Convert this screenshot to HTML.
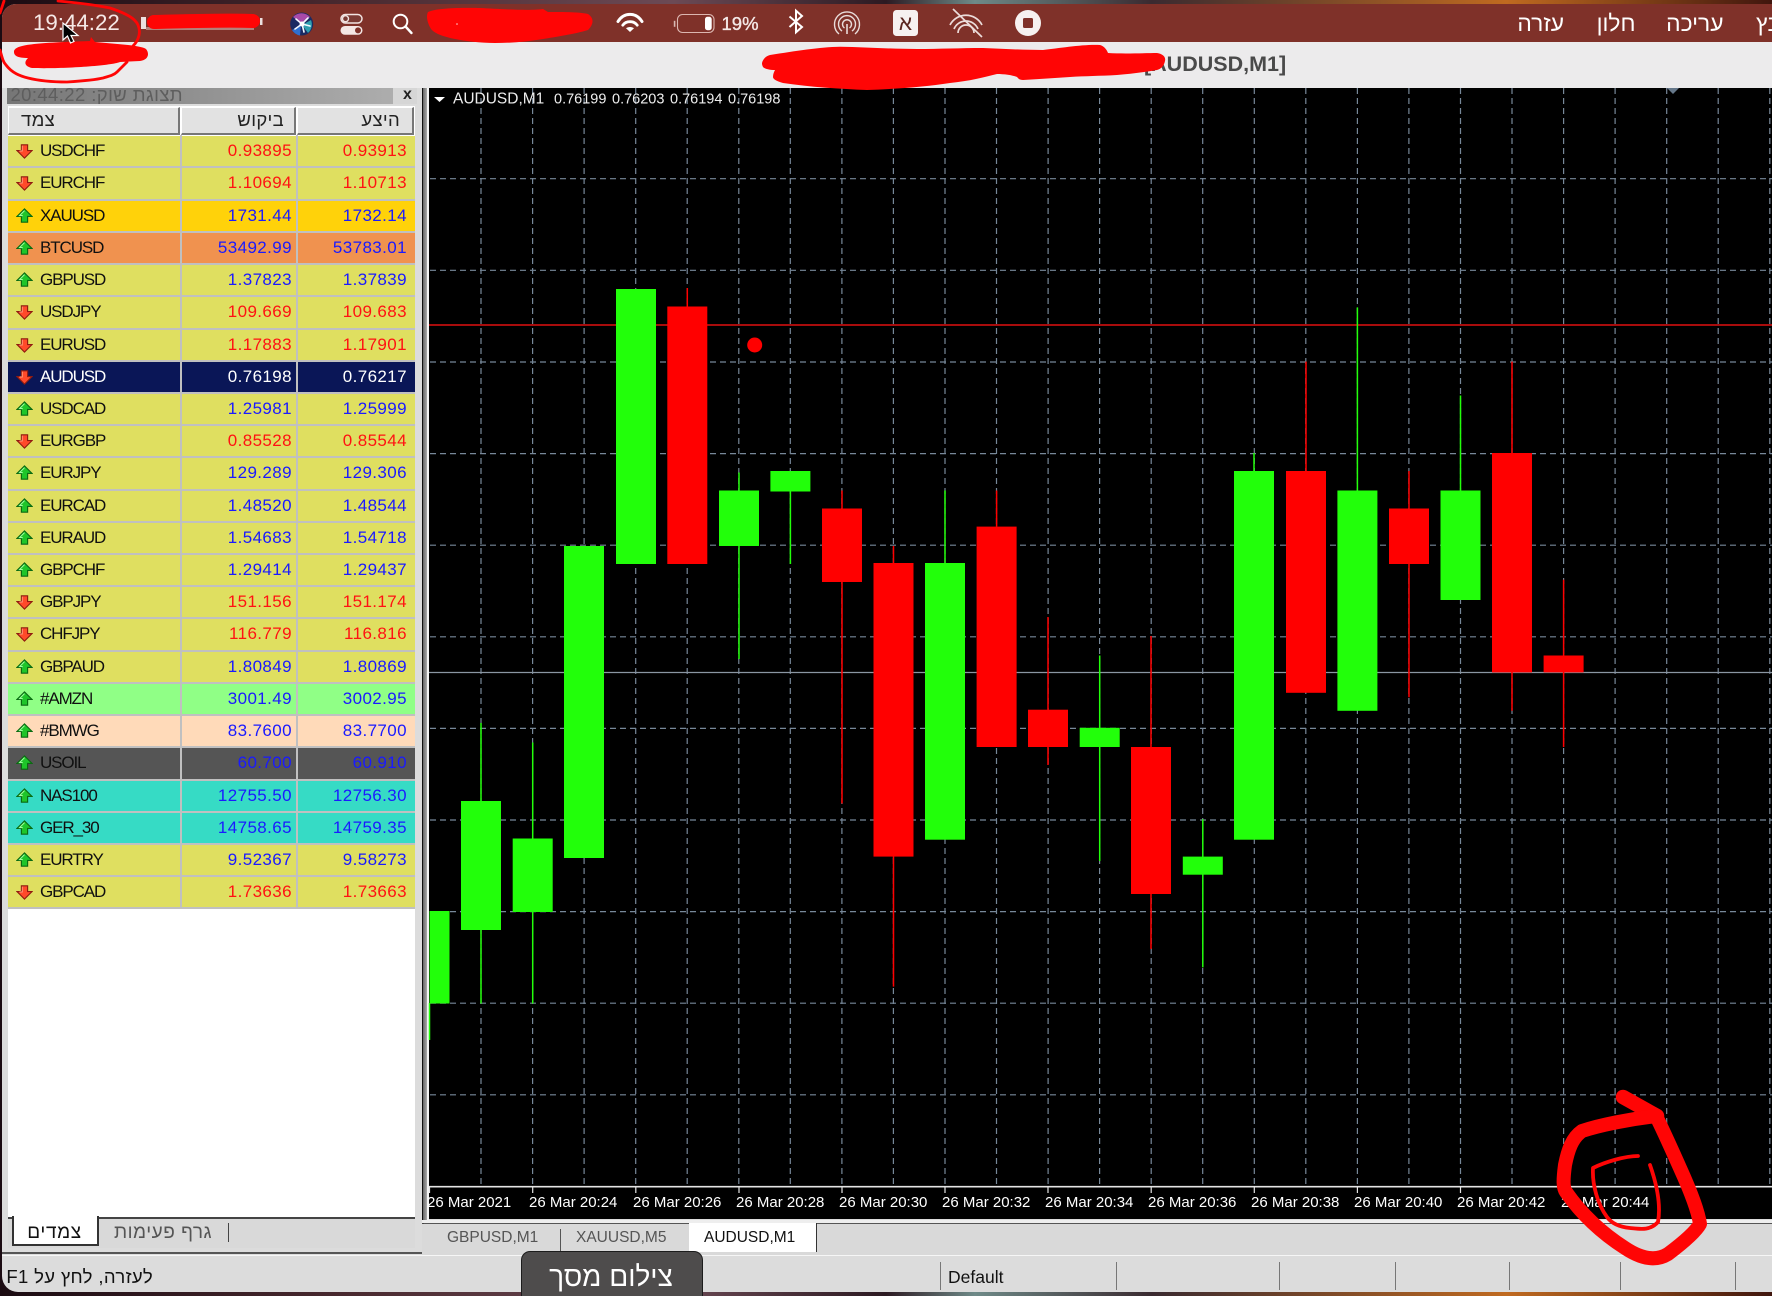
<!DOCTYPE html>
<html lang="he">
<head>
<meta charset="utf-8">
<title>AUDUSD,M1</title>
<style>
html,body{margin:0;padding:0;width:1772px;height:1296px;overflow:hidden;background:#160b10;}
body{position:relative;font-family:"Liberation Sans",sans-serif;}
.abs,.t{position:absolute;}
.t{white-space:nowrap;line-height:1;}
#wall{position:absolute;left:0;top:0;width:1772px;height:1296px;background:linear-gradient(90deg,#1b0b12 0,#4a2a30 20%,#6c4a55 38%,#2c1a22 50%,#6e8a88 55%,#3a2a30 65%,#c06a20 85%,#40160e 100%);}
#win{position:absolute;left:2px;top:4px;width:1770px;height:1288px;background:#dcdcdc;border-radius:14px 0 0 16px;overflow:hidden;}
#menu{position:absolute;left:2px;top:4px;width:1770px;height:38px;background:#7f3129;border-radius:14px 0 0 0;color:#fff;}
#title{position:absolute;left:2px;top:42px;width:1770px;height:46px;background:#ecebec;}
#ptitle{position:absolute;left:7px;top:88px;width:386px;height:16px;background:linear-gradient(90deg,#767676,#adadad);overflow:hidden;}
#pclose{position:absolute;left:393px;top:88px;width:24px;height:16px;background:#d6d6d6;}
#panel{position:absolute;left:8px;top:106px;width:407px;height:1111px;background:#fff;}
.h{position:absolute;top:107px;height:25px;background:#e2e2e2;border-top:1px solid #fff;border-left:1px solid #fff;border-right:2px solid #777;border-bottom:2px solid #777;}
.hb{font-size:18.500px;letter-spacing:.3px;color:#222;}
#rows{position:absolute;left:8px;top:136.200px;width:406.500px;}
.r{position:relative;height:32.230px;box-sizing:border-box;border-bottom:2px solid #c0c0c0;font-size:17px;line-height:30px;color:#101010;}
.r b{position:absolute;left:32px;top:0;font-weight:400;letter-spacing:-1.100px;}
.r i{position:absolute;top:0;font-style:normal;letter-spacing:.4px;}
.r i.p{right:122.500px;}
.r i.q{right:7.500px;}
.r svg{position:absolute;left:8px;top:7px;width:17px;height:16px;}
.k{background:#dfdf60;}
.dn i{color:#ff1212;}
.up i{color:#1a1aff;}
.sep{position:absolute;top:135px;height:774px;width:2px;background:#c0c0c0;}
#chart{position:absolute;left:0;top:0;width:1772px;height:1296px;}
.ax{font-size:15px;fill:#fff;}
.leg{font-size:14.500px;fill:#eee;}
.mn{font-size:22.800px;color:#fff;top:11.500px;}
</style>
</head>
<body>
<div id="wall"></div>
<div id="win"></div>

<div id="menu"></div>
<div id="title"></div>
<div class="t" style="left:33px;top:11.500px;font-size:22.300px;color:#f6e9e7;">19:44:22</div>
<div class="t" style="left:1144px;top:54px;font-size:21.500px;font-weight:700;color:#4a4a4a;" dir="ltr">[AUDUSD,M1]</div>
<div class="t mn" dir="rtl" style="right:208px;">עזרה</div>
<div class="t mn" dir="rtl" style="right:136.500px;">חלון</div>
<div class="t mn" dir="rtl" style="right:48.500px;">עריכה</div>
<div class="t mn" dir="rtl" style="left:1756px;">קובץ</div>
<div class="t" style="left:721.500px;top:15px;font-size:18.500px;color:#f4e9e7;-webkit-text-stroke:.35px #f4e9e7;">19%</div>

<svg class="abs" style="left:0;top:0;" width="1772" height="46" viewBox="0 0 1772 46">
<rect x="141" y="17" width="5" height="12" fill="#fff" opacity=".85"/><rect x="260" y="18" width="2.500" height="7" fill="#fff" opacity=".85"/>
<rect x="146" y="27" width="108" height="3" fill="#e8d0cc" opacity=".5"/>
<circle cx="301.700" cy="24" r="11.500" fill="#1b2a62"/>
<path d="M293 17a11.500 11.500 0 0 1 17 0L302 24z" fill="#a84aa8"/>
<path d="M311 20a11.500 11.500 0 0 1-3 13L302 25z" fill="#2f9fb0"/>
<path d="M292 30a11.500 11.500 0 0 0 8 5.500L301 25z" fill="#2e6fd0"/>
<path d="M302 24L296 19M302 24L308 18M302 24L310 26M302 24L304 32M302 24L295 29" stroke="#f4f8ff" stroke-width="1.600" stroke-linecap="round"/>
<circle cx="302" cy="24" r="2.500" fill="#fff"/>
<rect x="341" y="14.500" width="21" height="8.500" rx="4.250" fill="#7a3a34" stroke="#f2e4e2" stroke-width="1.500"/>
<circle cx="345.500" cy="18.700" r="3" fill="none" stroke="#f2e4e2" stroke-width="1.400"/>
<rect x="340.500" y="26" width="22" height="8.800" rx="4.400" fill="#f4e6e4"/>
<circle cx="358" cy="30.400" r="3" fill="#7f3129"/>
<circle cx="400.500" cy="21.500" r="6.800" fill="none" stroke="#fff" stroke-width="2"/>
<path d="M405.500 26.500l6 6.500" stroke="#fff" stroke-width="2.400" stroke-linecap="round"/>
<path d="M618 21.500C624 12 636 12 642 21.500" fill="none" stroke="#fff" stroke-width="3" stroke-linecap="round"/>
<path d="M622.800 25.200C626 20.500 634 20.500 637.200 25.200" fill="none" stroke="#fff" stroke-width="2.800" stroke-linecap="round"/>
<path d="M626 28.300C628 26.500 632 26.500 634 28.300L630 32z" fill="#fff"/>
<rect x="677.500" y="14.500" width="36.500" height="18" rx="5" fill="none" stroke="#dcb6b0" stroke-width="1.100"/>
<rect x="705" y="16.800" width="6.700" height="13.400" rx="2.500" fill="#fff"/>
<path d="M674.600 20.800v6" stroke="#d8b8b2" stroke-width="1.600"/>
<path d="M789.500 16.500L802 27L796 32.300V10.700L802 16L789.500 27" fill="none" stroke="#fff" stroke-width="2"/>
<g fill="none" stroke="#e9dcda" stroke-width="1.400">
<path d="M839 34a12.500 12.500 0 1 1 16 0"/>
<path d="M842 31a8.500 8.500 0 1 1 10 0"/>
<path d="M844.500 28a4.500 4.500 0 1 1 5 0"/>
</g>
<path d="M847 24v10" stroke="#e9dcda" stroke-width="1.600"/>
<rect x="893" y="10" width="25" height="26" rx="3.500" fill="#f6f1f0"/>
<text x="905.500" y="30" font-size="21" text-anchor="middle" fill="#5a2620">א</text>
<g fill="none" stroke="#ecdcda" stroke-width="1.700">
<path d="M950 25a18 18 0 0 1 32 0"/>
<path d="M954 29a13 13 0 0 1 24 0"/>
<path d="M958 33a8 8 0 0 1 16 0"/>
<path d="M953 9l29 28"/>
</g>
<circle cx="1028" cy="23" r="13" fill="#f6f1f0"/>
<rect x="1023" y="18" width="10" height="10" rx="1.500" fill="#7f3129"/>
</svg>

<!-- left market watch -->
<div id="panel"></div>
<div id="ptitle"><div class="t" dir="rtl" style="left:2px;width:174px;top:-2px;font-size:18.500px;letter-spacing:.4px;color:#5e5e5e;text-align:right;">תצוגת שוק: 20:44:22</div></div>
<div id="pclose"><div class="t" style="left:10px;top:-1px;font-size:16px;font-weight:700;color:#222;">x</div></div>
<div class="h" style="left:8px;width:169px;"></div>
<div class="h" style="left:181px;width:112px;"></div>
<div class="h" style="left:297px;width:114px;"></div>
<div class="t hb" dir="rtl" style="left:15px;width:40px;top:111px;text-align:right;">צמד</div>
<div class="t hb" dir="rtl" style="left:200px;width:84px;top:111px;text-align:right;">ביקוש</div>
<div class="t hb" dir="rtl" style="left:320px;width:80px;top:111px;text-align:right;">היצע</div>

<svg width="0" height="0" style="position:absolute;">
<defs>
<symbol id="u" viewBox="0 0 19 18"><path d="M9.500 1L1 9.500h5V16h7V9.500h5z" fill="#1fc52a" stroke="#0a6a12" stroke-width="1.300"/><path d="M9.500 3L4 8.500h3.500" fill="none" stroke="#9dff9d" stroke-width="1.200"/></symbol>
<symbol id="d" viewBox="0 0 19 18"><path d="M9.500 17L1 8.500h5V2h7v6.500h5z" fill="#ff4a2a" stroke="#8f1c10" stroke-width="1.300"/><path d="M7 3v6H4" fill="none" stroke="#ffa080" stroke-width="1"/></symbol>
</defs>
</svg>

<div id="rows">
<div class="r k dn"><svg><use href="#d"/></svg><b>USDCHF</b><i class="p">0.93895</i><i class="q">0.93913</i></div>
<div class="r k dn"><svg><use href="#d"/></svg><b>EURCHF</b><i class="p">1.10694</i><i class="q">1.10713</i></div>
<div class="r up" style="background:#ffd20a;"><svg><use href="#u"/></svg><b>XAUUSD</b><i class="p">1731.44</i><i class="q">1732.14</i></div>
<div class="r up" style="background:#f0924f;"><svg><use href="#u"/></svg><b>BTCUSD</b><i class="p">53492.99</i><i class="q">53783.01</i></div>
<div class="r k up"><svg><use href="#u"/></svg><b>GBPUSD</b><i class="p">1.37823</i><i class="q">1.37839</i></div>
<div class="r k dn"><svg><use href="#d"/></svg><b>USDJPY</b><i class="p">109.669</i><i class="q">109.683</i></div>
<div class="r k dn"><svg><use href="#d"/></svg><b>EURUSD</b><i class="p">1.17883</i><i class="q">1.17901</i></div>
<div class="r" style="background:#0a1657;color:#fff;"><svg><use href="#d"/></svg><b>AUDUSD</b><i class="p">0.76198</i><i class="q">0.76217</i></div>
<div class="r k up"><svg><use href="#u"/></svg><b>USDCAD</b><i class="p">1.25981</i><i class="q">1.25999</i></div>
<div class="r k dn"><svg><use href="#d"/></svg><b>EURGBP</b><i class="p">0.85528</i><i class="q">0.85544</i></div>
<div class="r k up"><svg><use href="#u"/></svg><b>EURJPY</b><i class="p">129.289</i><i class="q">129.306</i></div>
<div class="r k up"><svg><use href="#u"/></svg><b>EURCAD</b><i class="p">1.48520</i><i class="q">1.48544</i></div>
<div class="r k up"><svg><use href="#u"/></svg><b>EURAUD</b><i class="p">1.54683</i><i class="q">1.54718</i></div>
<div class="r k up"><svg><use href="#u"/></svg><b>GBPCHF</b><i class="p">1.29414</i><i class="q">1.29437</i></div>
<div class="r k dn"><svg><use href="#d"/></svg><b>GBPJPY</b><i class="p">151.156</i><i class="q">151.174</i></div>
<div class="r k dn"><svg><use href="#d"/></svg><b>CHFJPY</b><i class="p">116.779</i><i class="q">116.816</i></div>
<div class="r k up"><svg><use href="#u"/></svg><b>GBPAUD</b><i class="p">1.80849</i><i class="q">1.80869</i></div>
<div class="r up" style="background:#90ff86;"><svg><use href="#u"/></svg><b>#AMZN</b><i class="p">3001.49</i><i class="q">3002.95</i></div>
<div class="r up" style="background:#ffdab9;"><svg><use href="#u"/></svg><b>#BMWG</b><i class="p">83.7600</i><i class="q">83.7700</i></div>
<div class="r up" style="background:#555;"><svg><use href="#u"/></svg><b>USOIL</b><i class="p">60.700</i><i class="q">60.910</i></div>
<div class="r up" style="background:#36dbc5;"><svg><use href="#u"/></svg><b>NAS100</b><i class="p">12755.50</i><i class="q">12756.30</i></div>
<div class="r up" style="background:#36dbc5;"><svg><use href="#u"/></svg><b>GER_30</b><i class="p">14758.65</i><i class="q">14759.35</i></div>
<div class="r k up"><svg><use href="#u"/></svg><b>EURTRY</b><i class="p">9.52367</i><i class="q">9.58273</i></div>
<div class="r k dn"><svg><use href="#d"/></svg><b>GBPCAD</b><i class="p">1.73636</i><i class="q">1.73663</i></div>
</div>
<div class="sep" style="left:179.500px;"></div>
<div class="sep" style="left:295.500px;"></div>

<!-- panel tabs -->
<div class="abs" style="left:8px;top:1217px;width:407px;height:31px;background:#d9d9d9;border-top:2px solid #444;box-sizing:border-box;"></div>
<div class="abs" style="left:12px;top:1216px;width:87px;height:29.500px;background:#fff;border-left:2px solid #333;border-right:2px solid #333;border-bottom:2px solid #333;box-sizing:border-box;"></div>
<div class="t" dir="rtl" style="left:24px;width:61px;top:1223px;font-size:19px;letter-spacing:.6px;color:#111;text-align:center;">צמדים</div>
<div class="t" dir="rtl" style="left:110px;width:106px;top:1223px;font-size:19px;letter-spacing:.5px;color:#555;text-align:center;">גרף פעימות</div>
<div class="abs" style="left:228px;top:1223px;width:1px;height:19px;background:#444;"></div>
<div class="abs" style="left:2px;top:1252px;width:420px;height:2px;background:#555;"></div>

<!-- divider between panel and chart -->
<div class="abs" style="left:422px;top:88px;width:1px;height:1134px;background:#111;"></div>
<div class="abs" style="left:423px;top:88px;width:4px;height:1134px;background:linear-gradient(90deg,#666,#aaa);"></div>
<div class="abs" style="left:427px;top:88px;width:1.500px;height:1134px;background:#f4f4f4;"></div>

<!-- chart -->
<div class="abs" style="left:428.500px;top:88px;width:1344px;height:1131px;background:#000;"></div>
<svg id="chart" viewBox="0 0 1772 1296">
<path stroke="#778899" stroke-width="1.200" stroke-dasharray="6 4" fill="none" d="M481 88V1186M532.600 88V1186M584.100 88V1186M635.700 88V1186M687.200 88V1186M738.800 88V1186M790.300 88V1186M841.900 88V1186M893.400 88V1186M945 88V1186M996.500 88V1186M1048.100 88V1186M1099.600 88V1186M1151.200 88V1186M1202.700 88V1186M1254.300 88V1186M1305.800 88V1186M1357.400 88V1186M1408.900 88V1186M1460.500 88V1186M1512 88V1186M1563.600 88V1186M1615.100 88V1186M1666.700 88V1186M1718.200 88V1186M1769.800 88V1186"/>
<path stroke="#778899" stroke-width="1.200" stroke-dasharray="6 4" fill="none" d="M430 178.700H1772M430 270.300H1772M430 362H1772M430 453.600H1772M430 545.200H1772M430 636.800H1772M430 728.400H1772M430 820H1772M430 911.600H1772M430 1003.200H1772M430 1094.800H1772"/>
<path d="M429 672.500H1772" stroke="#8a96a2" stroke-width="1.200"/>
<path d="M429 325H1772" stroke="#e01010" stroke-width="1.500"/>
<circle cx="754.700" cy="345" r="7.500" fill="#f00"/>
<path d="M429 1186.700H1772" stroke="#e4e4e4" stroke-width="1.600"/>
<path d="M429.500 1187v6M532.700 1187v6M635.800 1187v6M739 1187v6M842 1187v6M945 1187v6M1048 1187v6M1151.200 1187v6M1254.300 1187v6M1357.400 1187v6M1460.500 1187v6M1563.600 1187v6" stroke="#e4e4e4" stroke-width="1.200"/>
<!-- green candles -->
<g stroke="#22ff0a" stroke-width="1.500">
<path d="M429.500 1003V1040M481 723V1003.500M532.700 742.500V1003.500M739 472.500V659M790.400 471V564M945 490.500V563M1099.700 655.500V861M1202.800 819.300V967.400M1254 453V471M1357.400 307.400V490.500M1460.500 395.500V490.500"/>
</g>
<g fill="#22ff0a">
<rect x="429.500" y="911" width="20" height="92.500"/>
<rect x="461" y="801" width="40" height="129"/>
<rect x="512.700" y="838.500" width="40" height="73.500"/>
<rect x="564" y="546" width="40" height="312"/>
<rect x="616" y="289" width="40" height="275"/>
<rect x="719" y="490.500" width="40" height="55.500"/>
<rect x="770.400" y="471" width="40" height="20.500"/>
<rect x="925" y="563" width="40" height="276.700"/>
<rect x="1079.700" y="727.800" width="40" height="19.200"/>
<rect x="1182.800" y="856.600" width="40" height="18.100"/>
<rect x="1234" y="471" width="40" height="368.700"/>
<rect x="1337.400" y="490.500" width="40" height="220.300"/>
<rect x="1440.500" y="490.500" width="40" height="109.500"/>
</g>
<!-- red candles -->
<g stroke="#f00" stroke-width="1.500">
<path d="M687.300 288V306.500M842 490.500V803.500M893.500 546V986.600M996.600 490.500V526.600M1048 617V765M1151 636V949M1306 361.600V471M1409 471V697.300M1512 361.600V710.800M1563.600 579.700V747"/>
</g>
<g fill="#f00">
<rect x="667.300" y="306.500" width="40" height="257.500"/>
<rect x="822" y="508.500" width="40" height="73.500"/>
<rect x="873.500" y="563" width="40" height="293.600"/>
<rect x="976.600" y="526.600" width="40" height="220.400"/>
<rect x="1028" y="709.700" width="40" height="37.300"/>
<rect x="1131" y="747" width="40" height="147"/>
<rect x="1286" y="471" width="40" height="221.800"/>
<rect x="1389" y="508.500" width="40" height="55.500"/>
<rect x="1492" y="453" width="40" height="219.400"/>
<rect x="1543.600" y="655.500" width="40" height="16.900"/>
</g>
<!-- legend -->
<path d="M434 97h11l-5.500 5z" fill="#fff"/>
<path d="M1667 88h12l-6 6z" fill="#66788a"/>
<text x="453" y="103.500" font-size="15.500" fill="#eee">AUDUSD,M1</text>
<text x="554" y="103.500" class="leg">0.76199</text>
<text x="612" y="103.500" class="leg">0.76203</text>
<text x="670" y="103.500" class="leg">0.76194</text>
<text x="728" y="103.500" class="leg">0.76198</text>
<!-- axis labels -->
<g class="ax">
<text x="427" y="1207">26 Mar 2021</text>
<text x="529" y="1207">26 Mar 20:24</text>
<text x="633" y="1207">26 Mar 20:26</text>
<text x="736" y="1207">26 Mar 20:28</text>
<text x="839" y="1207">26 Mar 20:30</text>
<text x="942" y="1207">26 Mar 20:32</text>
<text x="1045" y="1207">26 Mar 20:34</text>
<text x="1148" y="1207">26 Mar 20:36</text>
<text x="1251" y="1207">26 Mar 20:38</text>
<text x="1354" y="1207">26 Mar 20:40</text>
<text x="1457" y="1207">26 Mar 20:42</text>
<text x="1561" y="1207">26 Mar 20:44</text>
</g>
</svg>

<!-- chart tabs -->
<div class="abs" style="left:422px;top:1219.500px;width:1350px;height:35px;background:#d9d9d9;border-top:3px solid #eee;box-shadow:inset 0 1px 0 #444;box-sizing:border-box;"></div>
<div class="abs" style="left:424px;top:1223px;width:1348px;height:1px;background:#555;"></div>
<div class="t" style="left:447px;top:1230px;font-size:15.500px;color:#555;">GBPUSD,M1</div>
<div class="abs" style="left:560px;top:1229px;width:1px;height:22px;background:#555;"></div>
<div class="t" style="left:576px;top:1230px;font-size:15.500px;color:#555;">XAUUSD,M5</div>
<div class="abs" style="left:689px;top:1223px;width:128px;height:29px;background:#fff;border-right:1px solid #333;box-sizing:border-box;"></div>
<div class="t" style="left:704px;top:1230px;font-size:15.500px;color:#111;">AUDUSD,M1</div>
<div class="abs" style="left:2px;top:1254.500px;width:1770px;height:1.500px;background:#f6f6f6;"></div>

<!-- status bar -->
<div class="t" dir="rtl" style="left:4px;width:149px;top:1268px;font-size:18.500px;letter-spacing:.35px;color:#111;text-align:right;">לעזרה, לחץ על F1</div>
<div class="t" style="left:948px;top:1268.500px;font-size:17.500px;color:#111;">Default</div>
<div class="abs" style="left:940px;top:1262px;width:1px;height:28px;background:#777;"></div>
<div class="abs" style="left:1116px;top:1262px;width:1px;height:28px;background:#777;"></div>
<div class="abs" style="left:1279px;top:1262px;width:1px;height:28px;background:#777;"></div>
<div class="abs" style="left:1395px;top:1262px;width:1px;height:28px;background:#777;"></div>
<div class="abs" style="left:1509px;top:1262px;width:1px;height:28px;background:#777;"></div>
<div class="abs" style="left:1620px;top:1262px;width:1px;height:28px;background:#777;"></div>
<div class="abs" style="left:1735px;top:1262px;width:1px;height:28px;background:#777;"></div>

<!-- screenshot tooltip -->
<div class="abs" style="left:521px;top:1251px;width:182px;height:45px;background:#4e4c4c;border:1.500px solid #1c1c1c;border-bottom:0;border-radius:9px 9px 0 0;box-sizing:border-box;"></div>
<div class="t" dir="rtl" style="left:520px;width:182px;top:1263px;font-size:28px;color:#fff;text-align:center;">צילום מסך</div>

<!-- red annotations and cursor -->
<svg class="abs" style="left:0;top:0;" width="1772" height="1296" viewBox="0 0 1772 1296">
<g fill="none" stroke="#ff0505" stroke-linecap="round" stroke-linejoin="round">
<path stroke-width="2.800" d="M58 1C80 3 95 5 110 8C125 13 135 18 138 25C141 32 139 40 133 46"/>
<path stroke-width="2.800" d="M0 50C2 57 3 62 6 65C12 73 20 76 28 78C40 81 55 82 67 82C82 81 95 80 103 78C110 76 114 75 117 72C121 68 124 65 127 62"/>
<path stroke-width="2.800" d="M0 13L4 1"/>
<path stroke-width="14" d="M154 22C190 21 225 20 253 21"/>
<path stroke-width="14.500" d="M1623 1097L1657 1116"/>
<path stroke-width="14" d="M1657 1116C1630 1119 1600 1125 1582 1131C1572 1138 1568 1150 1565 1165C1563 1180 1563 1188 1566 1192C1580 1212 1600 1232 1625 1248C1640 1258 1655 1262 1668 1254C1680 1245 1695 1233 1700 1224C1698 1210 1690 1190 1680 1168C1672 1150 1664 1132 1656 1116"/>
<path stroke-width="3.800" d="M1638 1156C1625 1156 1605 1162 1593 1168C1592 1185 1598 1205 1607 1217C1612 1224 1620 1227 1630 1228C1640 1229 1650 1231 1658 1222C1661 1205 1657 1185 1650 1165"/>
</g>
<path fill="#ff0505" d="M14 52C14 45 30 43 90 41L91 37L95 42C115 44 140 45 146 49C150 54 148 60 140 61L120 62C110 66 60 69 32 68C24 66 24 62 28 58C18 58 14 56 14 52Z"/>
<path fill="#ff0505" d="M428 12C440 7 470 8 480 8C500 9 530 11 543 9L548 12C565 12 580 12 588 14C594 18 594 24 588 30C575 34 555 37 543 39C525 42 510 43 495 43C480 43 465 41 455 39C445 37 435 34 431 29C427 22 426 16 428 12Z"/>
<circle cx="457" cy="24" r=".8" fill="#ffd0d0"/>
<path fill="#ff0505" d="M762 63C763 59 766 56 770 55C795 51 820 47 840 46.700C865 47 890 49 917 49C940 49 960 48 983 48C1005 49 1025 50 1043 50C1060 48 1085 44 1100 45C1104 46 1107 50 1108 53C1125 54 1145 53 1157 53C1163 54 1166 57 1165 61C1164 66 1161 69 1157 70C1145 72 1130 74 1117 75C1100 76 1085 76 1070 77C1055 78 1040 79 1023 80C1019 80 1018 78 1017 77C1012 75 1004 74 997 74C985 77 970 81 950 83C925 87 895 89 867 90C840 89 810 87 783 83C776 81 773 79 773 77C773 74 774 72 775 70C770 70 765 69 763 67C762 65 762 64 762 63Z"/>
<path d="M63 23V40L67.500 36L70.500 43L74 41.500L71 35.500L78 35.500Z" fill="#000" stroke="#fff" stroke-width="1.200"/>
</svg>
</body>
</html>
